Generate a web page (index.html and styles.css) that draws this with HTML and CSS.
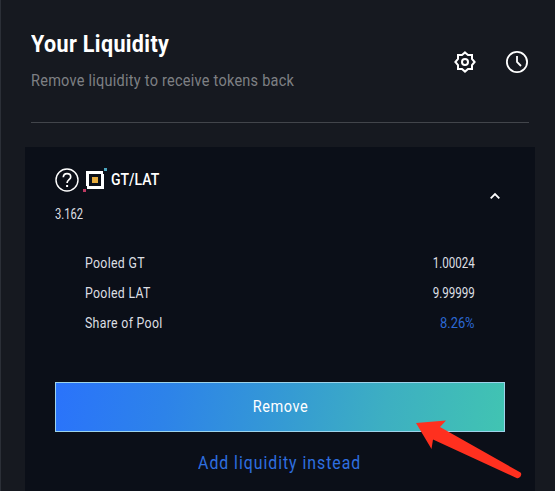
FILE: index.html
```html
<!DOCTYPE html>
<html lang="en">
<head>
<meta charset="utf-8">
<title>Your Liquidity</title>
<link rel="stylesheet" href="styles.css">
</head>
<body>
<main class="panel">
  <header class="header">
    <div class="heading">
      <h1 class="t title">Your Liquidity</h1>
      <p class="t subtitle">Remove liquidity to receive tokens back</p>
    </div>
    <div class="actions">
      <svg width="24" height="24" viewBox="0 0 24 24" fill="none" stroke="#fff" stroke-width="2"><path d="M12 2.4 15 5H19V9L21.6 12 19 15V19H15L12 21.6 9 19H5V15L2.4 12 5 9V5H9Z"/><circle cx="12" cy="12" r="3"/></svg>
      <svg width="24" height="24" viewBox="0 0 24 24" fill="none" stroke="#fff" stroke-width="1.8"><circle cx="12" cy="12" r="10.1"/><path d="M12 6V12L16 16"/></svg>
    </div>
  </header>
  <section class="card">
    <div class="summary">
      <div>
        <div class="pair">
          <svg width="24" height="24" viewBox="0 0 24 24" fill="none" stroke="#fff"><circle cx="12" cy="12" r="11" stroke-width="1.4"/><path d="M8.3 9.3C8.500 6.8 10 5.700 12 5.700c2.200 0 3.700 1.300 3.700 3.200 0 2.900-3.600 2.800-3.600 6.200" stroke-width="1.7"/><path d="M12.100 17v2" stroke-width="2"/></svg>
          <svg width="24" height="24" viewBox="0 0 24 24"><path d="M3 3H20V6H21V21H4V18H3ZM6 6V18H18V6Z" fill="#fff" fill-rule="evenodd"/><path d="M9 9h6v6H9Z" fill="#e5aa3c"/><path d="M21 0h3v3h-3Z" fill="#4ba4bd"/><path d="M0 21h3v3H0Z" fill="#bd3a62"/></svg>
          <h2 class="t pair-name">GT/LAT</h2>
        </div>
        <div class="t amount">3.162</div>
      </div>
      <svg class="chevron" width="12" height="8" viewBox="0 0 12 8" fill="none" stroke="#fff" stroke-width="1.8"><path d="M1.7 6.3 6 2l4.3 4.3"/></svg>
    </div>
    <dl class="details">
      <div class="row"><dt class="t">Pooled GT</dt><dd class="t value">1.00024</dd></div>
      <div class="row"><dt class="t">Pooled LAT</dt><dd class="t value">9.99999</dd></div>
      <div class="row"><dt class="t">Share of Pool</dt><dd class="t value share">8.26%</dd></div>
    </dl>
    <button class="remove"><span class="t">Remove</span></button>
    <a class="add"><span class="t">Add liquidity instead</span></a>
  </section>
  <svg class="pointer" width="110" height="62" viewBox="0 0 110 62"><path d="M4 3 34 .5 28 7 108.500 52.500Q110 54 108.500 56.500 106.500 59 104.500 58L21 19.500 19.500 29Z" fill="#ff301f"/></svg>
</main>
</body>
</html>
```

FILE: styles.css
```css
* { box-sizing: border-box; margin: 0; padding: 0; }
body {
  height: 491px;
  overflow: hidden;
  background: #161920;
  color: #fff;
  font-family: Roboto, "Liberation Sans", sans-serif;
}
.panel {
  position: relative;
  height: 491px;
  border-left: 1px solid #2b2f37;
  padding: 0 20px 0 24px;
}
svg { display: block; flex: none; }
/* Condensed lettering */
.t {
  display: block;
  width: max-content;
  white-space: nowrap;
  transform: scaleX(.88);
  transform-origin: left center;
}
.header {
  display: flex;
  justify-content: space-between;
  height: 123px;
  margin: 0 6px;
  padding-top: 30px;
  border-bottom: 1px solid #42454b;
}
.title { font-size: 23.5px; line-height: 28px; font-weight: 700; letter-spacing: .4px; transform: scaleX(.915); }
.subtitle {
  margin-top: 12px;
  font-size: 16.5px;
  line-height: 22px;
  letter-spacing: .28px;
  color: #7e8084;
}
.actions { display: flex; gap: 28px; padding-top: 20px; }
.card {
  height: 344px;
  margin-top: 24px;
  padding: 21px 30px 0;
  background: #0b0f18;
}
.summary { display: flex; justify-content: space-between; height: 80px; }
.pair { display: flex; align-items: center; height: 24px; gap: 4px; }
.pair-name { font-size: 16.5px; font-weight: 500; line-height: 24px; transform: scaleX(.85); }
.amount { margin-top: 12px; font-size: 14px; line-height: 20px; color: #dddfe3; transform: scaleX(.8); }
.chevron { margin: 24px 4px 0 0; }
.details { padding: 0 30px; color: #dddfe3; font-size: 14px; }
.row { display: flex; justify-content: space-between; height: 30px; line-height: 30px; }
.row dt { letter-spacing: .35px; }
.value { transform-origin: right center; transform: scaleX(.83); }
.share { color: #2b69d4; transform: scaleX(.92); }
.remove {
  display: flex;
  align-items: center;
  justify-content: center;
  width: 100%;
  height: 50px;
  margin-top: 44px;
  padding-bottom: 1px;
  border: 1px solid #9dd3ea;
  background: linear-gradient(100deg, #2a73fb, #2d83e9 25%, #359bd3 52%, #3dafc2 73%, #41c4b2);
  color: #fff;
  font: 16.5px Roboto, sans-serif;
  letter-spacing: .6px;
}
.add { display: flex; justify-content: center; margin-top: 19px; color: #2f6fe0; font-size: 18px; line-height: 24px; letter-spacing: 1.1px; }
.remove .t, .add .t { transform-origin: center; }
.pointer { position: absolute; left: 411px; top: 420px; }
```
